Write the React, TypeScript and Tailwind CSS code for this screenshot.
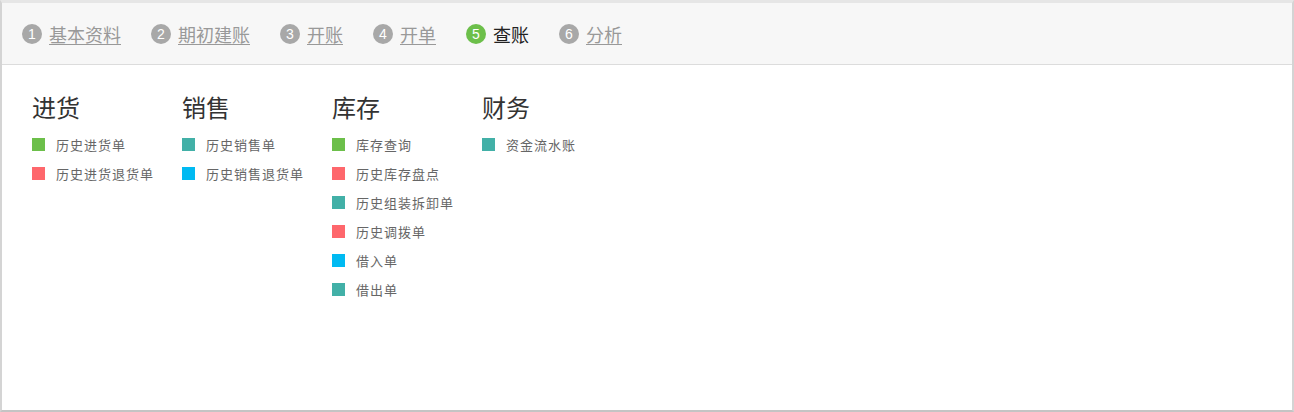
const steps = [
  { n: 1, label: "基本资料" },
  { n: 2, label: "期初建账" },
  { n: 3, label: "开账" },
  { n: 4, label: "开单" },
  { n: 5, label: "查账", active: true },
  { n: 6, label: "分析" },
];

type Item = { label: string; color: string };

const GREEN = "bg-[#6cbf4a]";
const RED = "bg-[#fe676c]";
const TEAL = "bg-[#42b0a7]";
const BLUE = "bg-[#00baf2]";

const groups: { title: string; items: Item[] }[] = [
  {
    title: "进货",
    items: [
      { label: "历史进货单", color: GREEN },
      { label: "历史进货退货单", color: RED },
    ],
  },
  {
    title: "销售",
    items: [
      { label: "历史销售单", color: TEAL },
      { label: "历史销售退货单", color: BLUE },
    ],
  },
  {
    title: "库存",
    items: [
      { label: "库存查询", color: GREEN },
      { label: "历史库存盘点", color: RED },
      { label: "历史组装拆卸单", color: TEAL },
      { label: "历史调拨单", color: RED },
      { label: "借入单", color: BLUE },
      { label: "借出单", color: TEAL },
    ],
  },
  {
    title: "财务",
    items: [{ label: "资金流水账", color: TEAL }],
  },
];

export default function App() {
  return (
    <div className="h-[412px] w-full bg-white border-t-[3px] border-t-[#e6e6e6] border-x-2 border-x-[#d4d4d4] border-b-2 border-b-[#c4c4c4] font-['Noto_Sans_CJK_SC',sans-serif] overflow-hidden">
      <div className="flex h-[62px] items-center gap-[30px] border-b border-[#dcdcdc] bg-[#f7f7f7] pl-5">
        {steps.map((s) => (
          <div key={s.n} className="flex items-center gap-[7px]">
            <span
              className={`flex h-5 w-5 items-center justify-center rounded-full text-[14px] leading-none text-white font-['Liberation_Sans',sans-serif] ${
                s.active ? "bg-[#6cbf4a]" : "bg-[#a8a8a8]"
              }`}
            >
              {s.n}
            </span>
            <span
              className={`text-[18px] leading-6 ${
                s.active ? "text-[#222]" : "text-[#999] underline underline-offset-2"
              }`}
            >
              {s.label}
            </span>
          </div>
        ))}
      </div>

      <div className="flex pl-[30px] pt-[26px]">
        {groups.map((g) => (
          <div key={g.title} className="w-[150px]">
            <h3 className="text-[24px] leading-8 text-[#333]">{g.title}</h3>
            <ul className="mt-[7px]">
              {g.items.map((it) => (
                <li key={it.label} className="flex h-[29px] items-center">
                  <span className={`h-[13px] w-[13px] ${it.color}`} />
                  <span className="ml-[11px] text-[13px] tracking-[1px] text-[#666]">{it.label}</span>
                </li>
              ))}
            </ul>
          </div>
        ))}
      </div>
    </div>
  );
}
